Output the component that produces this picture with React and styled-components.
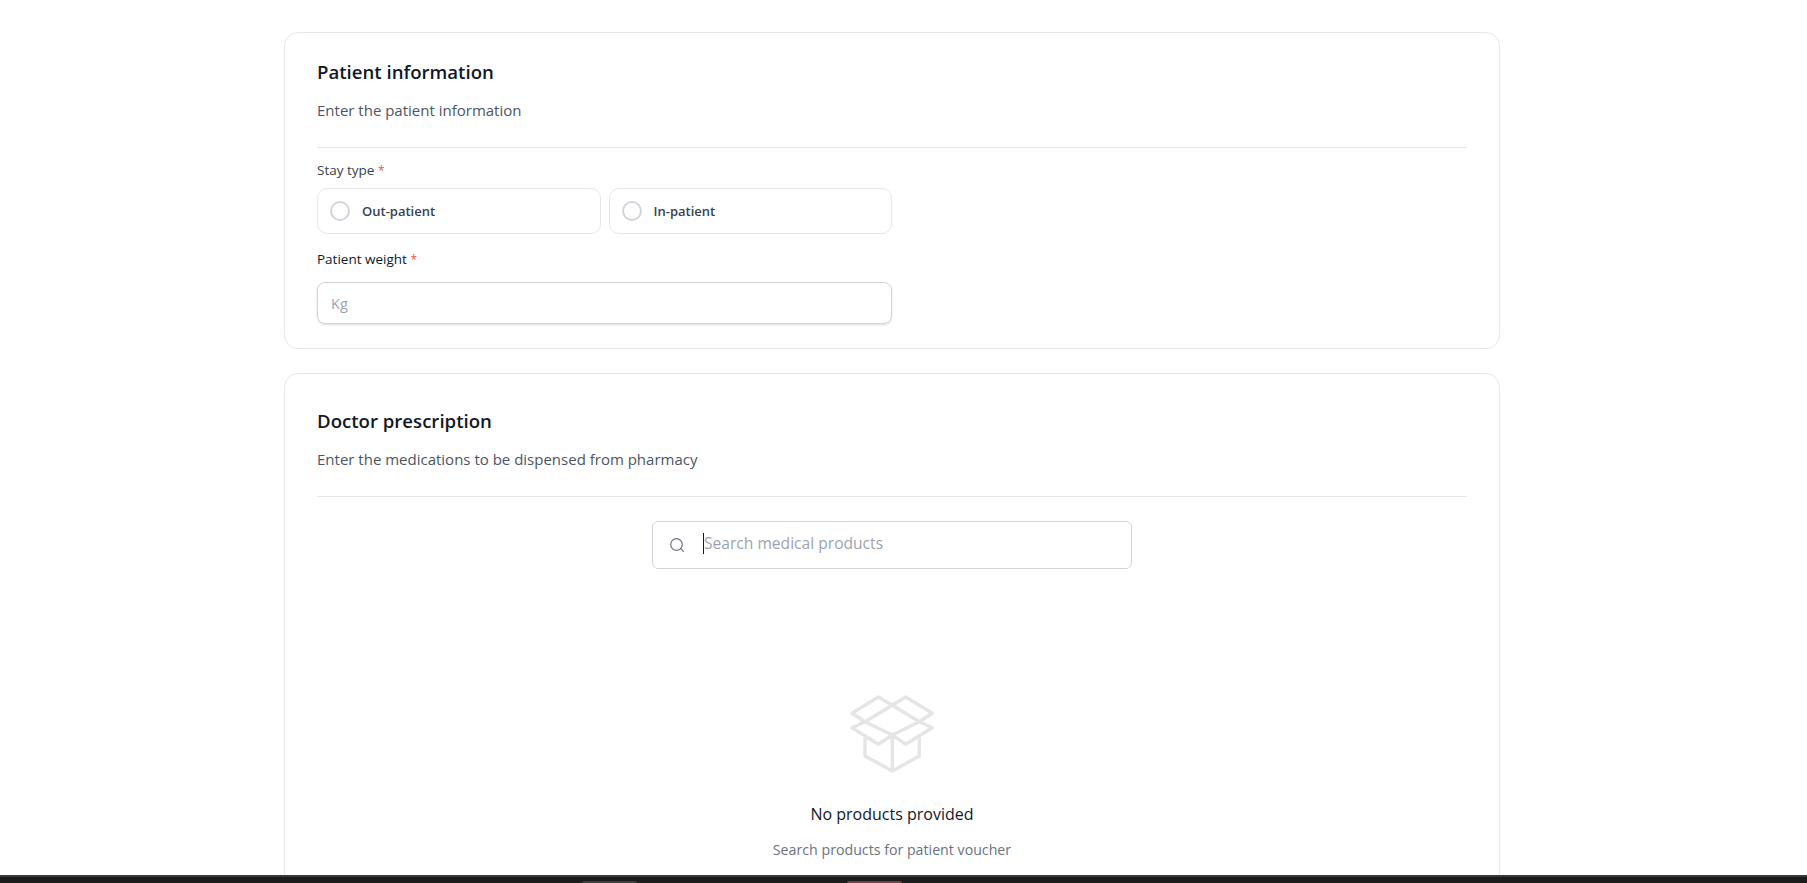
import React from "react";
import styled, { createGlobalStyle } from "styled-components";

const GlobalStyle = createGlobalStyle`
  * { box-sizing: border-box; }
  html, body { margin: 0; height: 100%; background: #fff; overflow: hidden; }
  body { font-family: "Open Sans", "Noto Sans", "Liberation Sans", sans-serif; color: #111827; }
`;

const Page = styled.div`
  height: 883px;
  display: flex;
  flex-direction: column;
`;

const Scroll = styled.main`
  flex: 1;
  min-height: 0;
  overflow: hidden;
  padding: 32px 0 0 284px;
  display: flex;
  flex-direction: column;
  gap: 24px;
`;

const Card = styled.section`
  width: 1216px;
  flex-shrink: 0;
  background: #fff;
  border: 1px solid #e5e7eb;
  border-radius: 14px;
  padding: ${(p) => p.$top}px 32px ${(p) => p.$bottom}px;
`;

const Title = styled.h2`
  margin: 0;
  font-size: 18.6px;
  line-height: 28px;
  font-weight: 600;
  color: #111827;
`;

const Subtitle = styled.p`
  margin: 14px 0 0;
  font-size: 15px;
  line-height: 20px;
  color: #4b5563;
`;

const Divider = styled.hr`
  border: 0;
  height: 1px;
  background: #e5e7eb;
  margin: 27px 0 0;
`;

const Column = styled.div`
  width: 575px;
  margin-top: 12px;
`;

const Label = styled.div`
  font-size: 13.5px;
  line-height: 20px;
  font-weight: 500;
  color: ${(p) => p.$color};
`;

const Required = styled.span`
  color: #f05252;
  font-size: 12px;
`;

const RadioRow = styled.div`
  display: grid;
  grid-template-columns: 1fr 1fr;
  gap: 8px;
  margin: 7px 0 15px;
`;

const RadioCard = styled.div`
  height: 46px;
  display: flex;
  align-items: center;
  gap: 12px;
  padding: 0 12px 1px;
  border: 1px solid #e5e7eb;
  border-radius: 10px;
  font-size: 13px;
  font-weight: 600;
  color: #374151;
`;

const RadioDot = styled.span`
  width: 20px;
  height: 20px;
  border: 2px solid #d1d5db;
  border-radius: 50%;
`;

const WeightInput = styled.div`
  height: 42px;
  margin-top: 12px;
  display: flex;
  align-items: center;
  padding: 0 13px;
  border: 1px solid #d1d5db;
  border-radius: 8px;
  box-shadow: 0 1px 2px rgba(17, 24, 39, 0.15);
  font-size: 14.5px;
  color: #9ca3af;
`;

const SearchBox = styled.div`
  width: 480px;
  height: 48px;
  margin: 24px auto 0;
  display: flex;
  align-items: center;
  gap: 18px;
  padding: 0 16px;
  border: 1px solid #d1d5db;
  border-radius: 6px;
`;

const SearchText = styled.span`
  border-left: 1px solid #111827;
  line-height: 21px;
  margin-bottom: 3px;
  font-size: 15.6px;
  color: #9ca3af;
`;

const Empty = styled.div`
  margin-top: 126px;
  display: flex;
  flex-direction: column;
  align-items: center;
`;

const EmptyTitle = styled.div`
  margin-top: 27px;
  font-size: 16px;
  line-height: 24px;
  color: #111827;
`;

const EmptyText = styled.div`
  margin-top: 14px;
  font-size: 14.2px;
  line-height: 20px;
  color: #6b7280;
`;

const Taskbar = styled.footer`
  height: 8px;
  flex-shrink: 0;
  background: #1c1c1c;
  border-top: 2px solid #3a3a3a;
  display: flex;
  align-items: flex-end;
`;

const TaskTab = styled.span`
  width: ${(p) => p.$width}px;
  height: 2px;
  margin-left: ${(p) => p.$left}px;
  border-radius: 3px 3px 0 0;
  background: ${(p) => p.$color};
`;

const SearchIcon = () => (
  <svg width="16" height="16" viewBox="0 0 16 16" fill="none" stroke="#6b7280" strokeWidth="1.2" strokeLinecap="round">
    <circle cx="7.5" cy="7.5" r="5.8" />
    <path d="M11.6 11.6L14.4 14.4" />
  </svg>
);

const BoxIcon = () => (
  <svg width="87" height="80" viewBox="0 0 87 80" fill="none" stroke="#e5e5e5" strokeWidth="3.4" strokeLinejoin="round">
    <path d="M43.3 10.3 29.3 2 3 18.3 16 26.7" />
    <path d="M43.3 10.3 56.7 2 83.3 18.3 70.3 26.7" />
    <path d="M43.3 10.3 16 26.7 43.3 40 70.3 26.7Z" />
    <path d="M16 26.7 3 32.7 29.3 49.3 43.3 40 56.7 49.3 83.3 32.7 70.3 26.7" />
    <path d="M16 43V61L43.3 76 70.3 61V43" />
    <path d="M43.3 40V76" />
  </svg>
);

const App = () => {
  return (
    <Page>
      <GlobalStyle />
      <Scroll>
        <Card $top={25} $bottom={24}>
          <Title>Patient information</Title>
          <Subtitle>Enter the patient information</Subtitle>
          <Divider />
          <Column>
            <Label $color="#374151">
              Stay type <Required>*</Required>
            </Label>
            <RadioRow>
              <RadioCard>
                <RadioDot />
                Out-patient
              </RadioCard>
              <RadioCard>
                <RadioDot />
                In-patient
              </RadioCard>
            </RadioRow>
            <Label $color="#111827">
              Patient weight <Required>*</Required>
            </Label>
            <WeightInput>Kg</WeightInput>
          </Column>
        </Card>
        <Card $top={33} $bottom={60}>
          <Title>Doctor prescription</Title>
          <Subtitle>Enter the medications to be dispensed from pharmacy</Subtitle>
          <Divider />
          <SearchBox>
            <SearchIcon />
            <SearchText>Search medical products</SearchText>
          </SearchBox>
          <Empty>
            <BoxIcon />
            <EmptyTitle>No products provided</EmptyTitle>
            <EmptyText>Search products for patient voucher</EmptyText>
          </Empty>
        </Card>
      </Scroll>
      <Taskbar>
        <TaskTab $left={582} $width={55} $color="#3d3d3d" />
        <TaskTab $left={210} $width={55} $color="#7a3b47" />
      </Taskbar>
    </Page>
  );
};

export default App;
